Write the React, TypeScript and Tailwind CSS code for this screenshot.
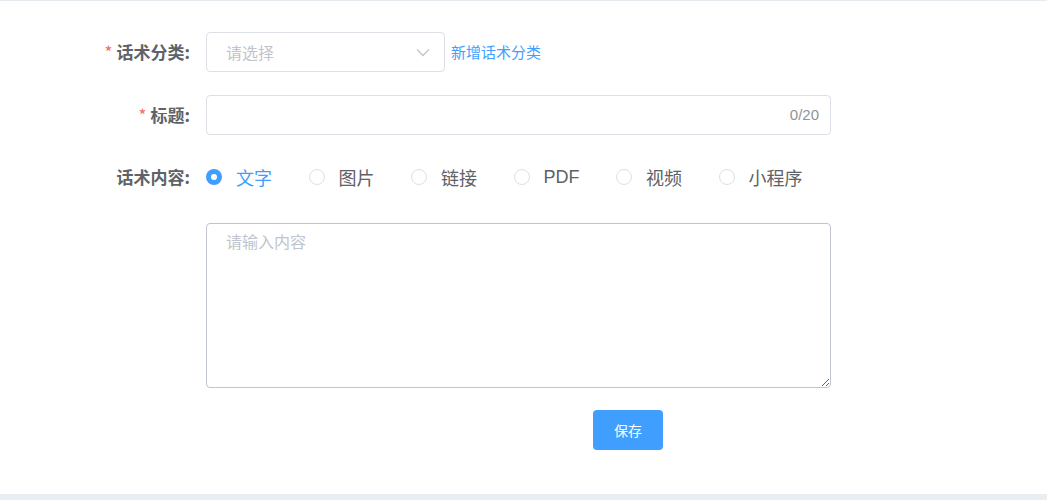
import { useState } from 'react'

const FONT = '"Noto Sans CJK SC", "Liberation Sans", sans-serif'

const CONTENT_TYPES = ['文字', '图片', '链接', 'PDF', '视频', '小程序']

const Label = ({ text, required }: { text: string; required?: boolean }) => (
  <div className="flex w-[190px] shrink-0 items-center justify-end text-[17px] font-bold text-[#606266]">
    {required && <span className="mr-[4px] font-normal text-[#f56c6c]">*</span>}
    {text}:
  </div>
)

export default function App() {
  const [type, setType] = useState('文字')

  return (
    <div
      className="flex h-[500px] w-full flex-col border-t border-[#e6ebf0] bg-white"
      style={{ fontFamily: FONT }}
    >
      <div className="flex-1">
        {/* 话术分类 */}
        <div className="mt-[31px] flex h-[40px] items-center">
          <Label text="话术分类" required />
          <div className="ml-[16px] flex h-[40px] w-[239px] items-center justify-between rounded-[4px] border border-[#dcdfe6] pl-[19px] pr-[13px]">
            <span className="text-[16px] text-[#c0c4cc]">请选择</span>
            <svg width="16" height="16" viewBox="0 0 16 16" fill="none">
              <path d="M2 5.5l6 6 6-6" stroke="#c0c4cc" strokeWidth="1.3" />
            </svg>
          </div>
          <span className="ml-[6px] text-[15px] text-[#409eff]">新增话术分类</span>
        </div>

        {/* 标题 */}
        <div className="mt-[23px] flex h-[40px] items-center">
          <Label text="标题" required />
          <div className="ml-[16px] flex h-[40px] w-[625px] items-center justify-end rounded-[4px] border border-[#dcdfe6] pr-[11px]">
            <span className="text-[15px] text-[#909399]" style={{ fontFamily: '"Liberation Sans", sans-serif' }}>
              0/20
            </span>
          </div>
        </div>

        {/* 话术内容 */}
        <div className="mt-[22px] flex h-[40px] items-center">
          <Label text="话术内容" />
          <div className="ml-[16px] flex items-center">
            {CONTENT_TYPES.map((t) => {
              const checked = t === type
              return (
                <label
                  key={t}
                  onClick={() => setType(t)}
                  className="mr-[36.5px] flex cursor-pointer items-center whitespace-nowrap"
                >
                  {checked ? (
                    <span className="flex h-[16px] w-[16px] items-center justify-center rounded-full bg-[#409eff]">
                      <span className="h-[6px] w-[6px] rounded-full bg-white" />
                    </span>
                  ) : (
                    <span className="h-[16px] w-[16px] rounded-full border border-[#dcdfe6]" />
                  )}
                  <span
                    className={`ml-[14px] text-[18px] ${checked ? 'text-[#409eff]' : 'text-[#606266]'}`}
                    style={t === 'PDF' ? { fontFamily: '"Liberation Sans", sans-serif' } : undefined}
                  >
                    {t}
                  </span>
                </label>
              )
            })}
          </div>
        </div>

        {/* textarea */}
        <div className="mt-[26px] flex">
          <div className="w-[190px] shrink-0" />
          <textarea
            placeholder="请输入内容"
            className="ml-[16px] h-[165px] w-[625px] rounded-[4px] border border-[#c0c4cc] px-[19px] py-[5px] text-[16px] text-[#606266] outline-none placeholder:text-[#c0c4cc]"
          />
        </div>

        {/* save */}
        <div className="mt-[22px] flex">
          <div className="w-[593px] shrink-0" />
          <button className="h-[40px] w-[70px] rounded-[4px] bg-[#409eff] text-[14px] text-white">
            保存
          </button>
        </div>
      </div>
      <div className="h-[6px] bg-[#e9eef3]" />
    </div>
  )
}
